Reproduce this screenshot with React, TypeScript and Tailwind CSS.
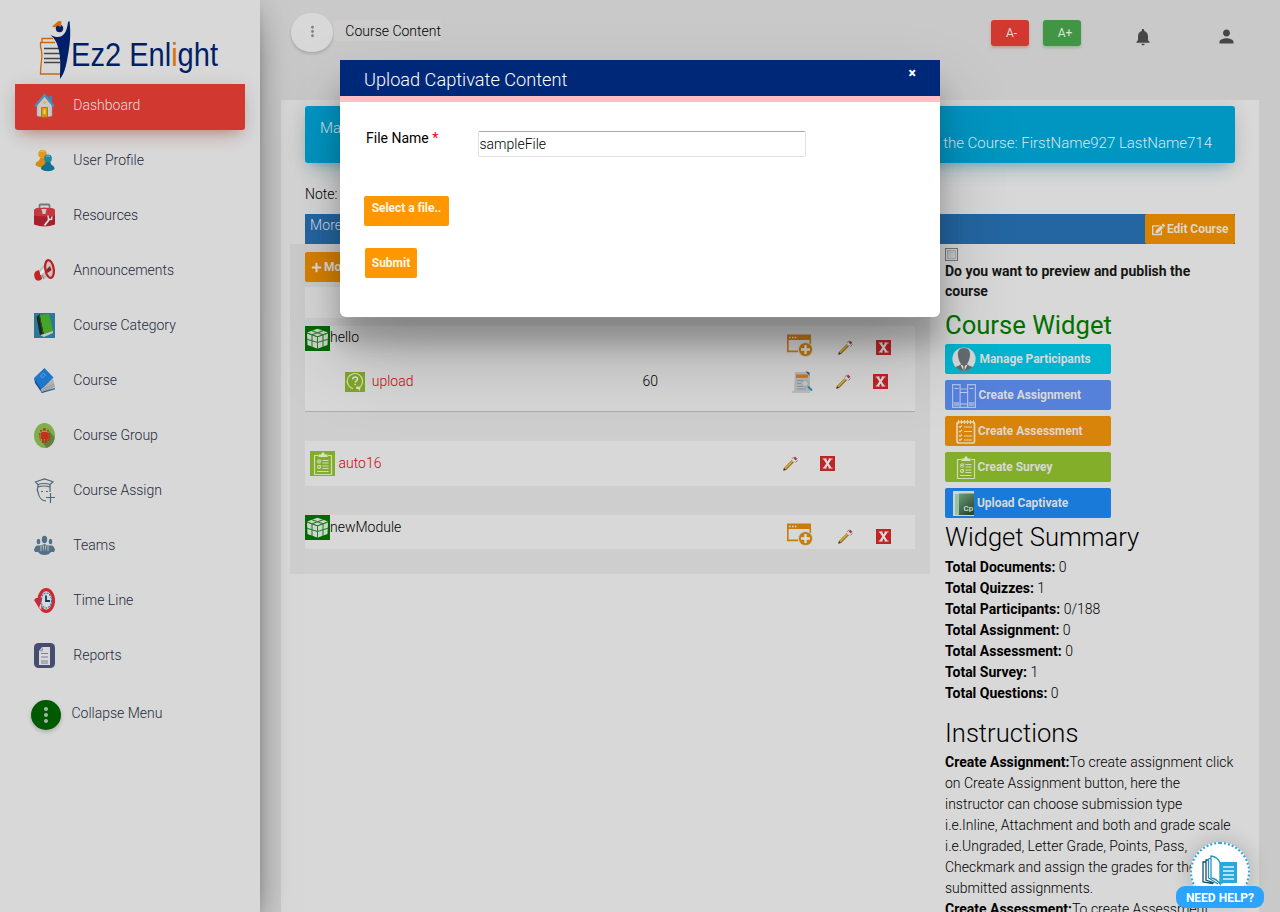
import React from 'react';
import { FaEdit, FaPlus } from 'react-icons/fa';
import { MdNotifications, MdPerson, MdMoreVert } from 'react-icons/md';

const Svg = ({ w, h, vb, className = '', children }: { w: number; h: number; vb?: string; className?: string; children: React.ReactNode }) => (
  <svg width={w} height={h} viewBox={vb ?? `0 0 ${w} ${h}`} preserveAspectRatio="none" className={`block shrink-0 ${className}`} fill="none">
    {children}
  </svg>
);

const Logo = () => (
  <Svg w={184} h={62}>
    <path d="M4 24V19.500h11M2 23.500h15M2.500 23.500v4q2 6 1 14-1 8-1 13.500h20" stroke="#c96a0c" strokeWidth="1.300" />
    <path d="M6 29.500h15M6 34.500h16M6 39.500h16M6 43.500h16" stroke="#444" strokeWidth="1.500" />
    <path d="M12.500 16c9 4.500 16 2 17.500-13l1.500-1c1.500 13 .5 22-1 31-2 11-3 20-8.500 27 0-10 1-19-1-28-1.500-8-4-12-8.500-16z" fill="#001f66" />
    <circle cx="21.500" cy="9.500" r="3.700" fill="#001f66" />
    <path d="M14 7.500L20.500 2l3 .5-.5 5.500-3.500-1.500-2.500 2z" fill="#d8700a" />
    <text x="33" y="47" fontFamily="Liberation Sans, Arial, sans-serif" fontSize="33.500" fill="#001f66" textLength="147" lengthAdjust="spacingAndGlyphs">
      Ez2 Enl<tspan fill="#d8700a">i</tspan>ght
    </text>
  </Svg>
);

const HomeIcon = () => (
  <Svg w={21} h={25}>
    <path d="M15 3h3v7l-3-3z" fill="#3f82b4" />
    <path d="M3 12L10.500 3.500 18 12v11q-7 2-15 0z" fill="#c9c9c9" stroke="#999" strokeWidth=".6" />
    <path d="M1 13.500L10.500 2 20 13.500" stroke="#4f8db8" strokeWidth="2.300" />
    <circle cx="10.500" cy="9.500" r="1.300" fill="#e0b020" />
    <path d="M7.500 14.500h6V24h-6z" fill="#d99a19" stroke="#b07a10" />
    <path d="M9.500 16.500h2V21h-2z" fill="#f5cf4f" />
  </Svg>
);
const UserIcon = () => (
  <Svg w={21} h={25}>
    <circle cx="8.500" cy="6" r="4.300" fill="#e09a1c" />
    <path d="M1.500 17c0-4 4-3 4.500-7h5c0 4 2 3 2 8-3 2-9 2-11.500-1z" fill="#d98c10" />
    <circle cx="14" cy="10.500" r="3.900" fill="#1f86a3" />
    <path d="M7 21c0-4 4-3 4.500-7h5c0 4 4 3 4 7-3 3-10 3-13.500 0z" fill="#10708f" />
    <path d="M6.500 3.500q2-1.500 4 0M12 8.500q2-1.500 4 0" stroke="#fff" strokeOpacity=".4" />
  </Svg>
);
const ToolIcon = () => (
  <Svg w={21} h={25}>
    <path d="M5.500 7V2.500q0-1 1-1h8q1 0 1 1V7" stroke="#777" strokeWidth="1.800" />
    <path d="M0 8q0-2 2-2.500 8.500-1.500 17 0 2 .5 2 2.500v13.500q-10.500 4-21 0z" fill="#a8202b" />
    <path d="M0 8q0-2 2-2.500 8.500-1.500 17 0 2 .5 2 2.500v4.500q-10.500 2-21 0z" fill="#c5383f" />
    <path d="M7.500 6h5l-1 5h-3z" fill="#c9c9c9" />
    <path d="M10.500 22.500l5-6.500" stroke="#ddd" strokeWidth="2" />
    <path d="M14 12.500l.5 3.500 3 .5.500-3" stroke="#ddd" strokeWidth="1.500" />
  </Svg>
);
const HornIcon = () => (
  <Svg w={21} h={25}>
    <path d="M1 14q3-3 6-1l1 8q-3 3-6 1-3-4-1-8z" fill="#c02525" />
    <path d="M5 12.500L13 3l5 16-10 1z" fill="#bcbcbc" />
    <path d="M6 14l7-7 1 5-8 5z" fill="#e8e8e8" />
    <ellipse cx="15.500" cy="11" rx="4.200" ry="9" fill="#c5c5c5" stroke="#bf1e1e" strokeWidth="2.200" transform="rotate(-9 15.500 11)" />
    <path d="M12 12l4-4 1.500 4-4 3z" fill="#8f2525" />
    <path d="M8 17l2 4" stroke="#888" strokeWidth="1.300" />
  </Svg>
);
const GreenBookIcon = () => (
  <Svg w={21} h={25}>
    <path d="M0 0h21v25H0z" fill="#2b7898" />
    <path d="M2.500 4L6 1l4 20-4 1.500z" fill="#222" />
    <path d="M5.500 2L15 1l4 17-9 3.500z" fill="#46a529" />
    <path d="M6 22l4-1 9-3v2l-9 4z" fill="#c5c5c5" />
    <path d="M5.500 3l3.500 18" stroke="#1b5a12" strokeWidth="1.200" />
  </Svg>
);
const BlueBookIcon = () => (
  <Svg w={21} h={25}>
    <path d="M0 10L10.500 0l9 9.500-8 9L6 22z" fill="#1f77cc" />
    <path d="M7 22l5-5 7-7 2 9-13 6z" fill="#b3b3b3" />
    <path d="M9 21l11-5M9 23l12-5" stroke="#888" strokeWidth=".6" />
    <path d="M0 10l7 11 1 4L1 15z" fill="#17539c" />
    <path d="M6.500 8L9.500 5l2 2-3 3z" stroke="#69a9e5" strokeWidth=".8" />
    <path d="M7.500 24.500l13.500-4" stroke="#1d5ba4" strokeWidth="1.300" />
  </Svg>
);
const GroupIcon = () => (
  <Svg w={21} h={25}>
    <ellipse cx="10.500" cy="12.500" rx="10.500" ry="12.500" fill="#7fae4d" />
    <path d="M15 8l5.500 6c0 5-3 9.500-8 11L9 20z" fill="#647f3e" />
    <circle cx="10.500" cy="6.500" r="1.400" fill="#c53018" />
    <circle cx="7" cy="7.700" r="1" fill="#c53018" />
    <circle cx="14" cy="7.700" r="1" fill="#c53018" />
    <path d="M8 9h5l1 1v6h-1v4h-2v-4h-1v4H8v-4H7v-6zM5 10h1.500v8H6zM14.500 10H16l-.5 8h-1z" fill="#c53018" />
  </Svg>
);
const AssignIcon = () => (
  <Svg w={21} h={25}>
    <path d="M1.500 4l4-1.500 5-1.500 5 1.500 3.500 1.500-3 2.500q-6-2-12 0zM4 6v3q6-2 12 0V6M4 9q-1.500 2 0 5c1 6 3 8.500 8 9M16 9v5" stroke="#4d6776" strokeWidth="1.200" />
    <path d="M7 13.500h2M12 13.500h2M16.500 15v10M12 19.500h9" stroke="#4d6776" strokeWidth="1.200" />
  </Svg>
);
const TeamsIcon = () => (
  <Svg w={21} h={25}>
    <g fill="#527186">
      <ellipse cx="10.500" cy="6.500" rx="2.700" ry="3.700" />
      <ellipse cx="4.500" cy="8.500" rx="1.800" ry="2.800" />
      <ellipse cx="16.500" cy="8.500" rx="1.800" ry="2.800" />
      <path d="M0 17q1-4 3-4.500h4L10.500 11l3.500 1.500h4q2 .5 3 4.500l-1 2h-3q-2 3-6.500 3T4 19H1z" />
    </g>
    <path d="M9 12l1.500 7 1.500-7M7 13v5M14 13v5" stroke="#d8d8d8" strokeWidth=".8" />
    <path d="M10.500 12v7" stroke="#527186" />
  </Svg>
);
const ClockIcon = () => (
  <Svg w={21} h={25}>
    <ellipse cx="12.200" cy="12.500" rx="7.300" ry="10.800" fill="#d8d8d8" stroke="#cf2734" strokeWidth="3.200" />
    <path d="M3 17l4-1 .5 6z" fill="#d8d8d8" />
    <path d="M0 12l2-2h6.500L5 20z" fill="#cf2734" />
    <ellipse cx="12.300" cy="12.500" rx="5.200" ry="7.500" stroke="#237ea9" strokeWidth="1.100" strokeDasharray="2 1" />
    <path d="M12 7.500v5.500h4" stroke="#123c5b" strokeWidth="1.800" />
  </Svg>
);
const ReportIcon = () => (
  <Svg w={21} h={25}>
    <rect width="21" height="25" rx="4.500" fill="#454d70" />
    <path d="M8 4h8v18H5V8z" fill="#d8d8d8" />
    <path d="M5 8.500h4V4z" fill="#a5a8b8" />
    <path d="M7 10.500h7M7 14h7M7 18h7M7 20h7" stroke="#7b8098" strokeWidth="1" />
  </Svg>
);

const ModuleIcon = () => (
  <Svg w={25} h={25}>
    <path d="M0 0h25v25H0z" fill="#006b00" />
    <path d="M2 6.500L12.500 2.800 23 6.500l-10.500 4z" fill="#cdd6cd" />
    <path d="M2 7.500l10 3.500v11.500L2.500 19zM23 7.500L13 11v11.500l9.500-3.500z" fill="#cdd6cd" />
    <path d="M7 9v12M18 9v12M2 13.300l10.500 3.200L23 13.300M7 4.800l11 3.900M18 4.800L7 8.700" stroke="#2a7d2a" strokeWidth="1.100" />
    <path d="M12.500 10.500v12.500M2 7l10.500 3.800L23 7" stroke="#2a7d2a" strokeWidth=".9" />
  </Svg>
);
const QuizIcon = () => (
  <Svg w={20} h={20}>
    <path d="M0 0h20v20H0z" fill="#80a827" />
    <path d="M8 16.700A7.700 7.700 0 1 1 15.500 14.500" stroke="#d3dcbf" strokeWidth="1.200" />
    <path d="M11 14.800l5-.5-1.500 5-1-2-2.500-.5z" fill="#d8dfc8" />
    <path d="M7.700 7.300q.3-2.200 2.500-2.200 2.300 0 2.300 2 0 1.200-1.200 1.900-1.100.6-1.100 1.600M10.200 11.700v1.600" stroke="#e1e7d4" strokeWidth="1.500" />
  </Svg>
);
const ClipIcon = ({ bg }: { bg?: string }) => (
  <Svg w={25} h={25}>
    {bg && <path d="M0 0h25v25H0z" fill={bg} />}
    <path d="M8 4.500H4.500v19h17v-19H18" stroke="#d0dab8" strokeWidth="1.200" />
    <path d="M8.500 6V3.500h2.500q2-4.500 4 0h2.500V6z" fill="#d8dfc5" />
    <circle cx="9" cy="10.500" r="1.700" stroke="#d0dab8" />
    <circle cx="9" cy="16" r="1.700" stroke="#d0dab8" />
    <path d="M12.500 9.500h6M12.500 12h6M12.500 15h6M12.500 17.500h6M7 20.500h11.500" stroke="#d0dab8" strokeWidth="1" />
    <path d="M8 10l1 1 2-2.500M8 15.500l1 1 2-2.500" stroke="#d0dab8" strokeWidth=".8" />
  </Svg>
);
const AddWindowIcon = () => (
  <Svg w={26} h={23}>
    <path d="M.8 2v15.400H11" stroke="#c87c0c" strokeWidth="1.600" />
    <path d="M23.300 5v5" stroke="#c87c0c" strokeWidth="1.600" />
    <path d="M0 .5h24V6H0z" fill="#c87c0c" />
    <path d="M2.200 3.500h1.500M5 3.500h1.500M7.800 3.500h1.500" stroke="#ddd" strokeWidth="1.500" />
    <circle cx="18.500" cy="15.500" r="7.500" fill="#cbcbcb" />
    <circle cx="18.500" cy="15.500" r="6.600" fill="#c87c0c" />
    <path d="M18.500 11v9M14 15.500h9" stroke="#ddd" strokeWidth="2.300" />
  </Svg>
);
const PencilIcon = ({ className = '' }: { className?: string }) => (
  <Svg w={15} h={15} className={className}>
    <path d="M1.800 13.200L10.500 4.500" stroke="#7a5d1c" strokeWidth="3" />
    <path d="M2 12.600L10.300 4.300" stroke="#d6ab30" strokeWidth="1.700" />
    <path d="M9.800 5l2-2" stroke="#ddd" strokeWidth="2.800" />
    <path d="M11.600 3.400l1.700-1.700" stroke="#b03442" strokeWidth="3" />
    <path d="M9 2.800l2-2M12.500 6.500l2-2" stroke="#444" strokeWidth=".6" />
    <path d="M.3 14.700L.8 12.200l2 1.900z" fill="#222" />
  </Svg>
);
const DeleteIcon = ({ className = '' }: { className?: string }) => (
  <Svg w={15} h={15} className={className}>
    <path d="M0 0h15v15H0z" fill="#c02425" />
    <path d="M4.600 3l5.800 9M10.400 3l-5.800 9" stroke="#ddd" strokeWidth="2.300" />
    <path d="M2.700 3h4M8.500 3h4M2.700 12h4M8.500 12h4" stroke="#ddd" strokeWidth="1.200" />
  </Svg>
);
const DocIcon = () => (
  <Svg w={21} h={22}>
    <path d="M3 1h12l3 3v16H2z" fill="#b7babc" />
    <path d="M13.500 0l4 1.500v3.500z" fill="#4d5255" />
    <path d="M4 3.500h12v3.300H4z" fill="#cc7820" />
    <path d="M5 9.500h6M5 12.500h4M5 15.500h9M5 18h9" stroke="#8a9ba6" strokeWidth="1.100" />
    <circle cx="13" cy="12.500" r="3.300" fill="#c3c9cd" stroke="#a4a9ad" strokeWidth="1" />
    <path d="M16 15.500l4 4" stroke="#3182aa" strokeWidth="2" />
    <path d="M0 21h18" stroke="#a0a0a0" strokeWidth="1" />
  </Svg>
);

const PersonWidgetIcon = () => (
  <Svg w={24} h={24}>
    <circle cx="12" cy="12" r="11.600" fill="#d5d8d8" />
    <path d="M12 1c5 0 6.500 3.500 6 8-.7 4-1.500 6-3 8v2l-3 1-3-1v-2c-1.500-2-2.300-4-3-8-.5-4.500 1-8 6-8z" fill="#666b70" />
    <path d="M3.500 20q4-1.500 6-3l2.500 6.500L14.500 17q2 1.500 6 3-3.500 4-8.500 4t-8.500-4z" fill="#666b70" />
    <path d="M9.500 18l2.500 5 2.500-5" stroke="#eee" strokeWidth="1.400" />
    <path d="M12 20v4" stroke="#666b70" strokeWidth="1.400" />
  </Svg>
);
const BooksIcon = () => (
  <Svg w={24} h={24}>
    <path d="M.6.6h7.500v22.800H.6zM8.100 5h7.500v18.400H8.100zM15.600.6h7.800v22.800h-7.800z" stroke="#afc0e8" strokeWidth="1.200" />
    <path d="M2.500 4.500h4M17.500 4.500h4M8 8.500h7.500M8 20h7.500" stroke="#c1cdea" strokeWidth="1" />
    <path d="M1.500 18h6v4h-6zM16.500 18h6v4h-6z" fill="#95abe0" />
  </Svg>
);
const ListIcon = () => (
  <Svg w={20} h={25}>
    <rect x="1" y="3" width="17.500" height="21" rx="2" stroke="#e3d4b6" strokeWidth="1.700" />
    <path d="M2.500 1v4M5.500 1v4M8.500 1v4M11.500 1v4M14.500 1v4M17.500 1v4" stroke="#e3d4b6" strokeWidth="1.100" />
    <path d="M8 8h8M8 12.500h8M8 17h8M8 21h8M3 7.500l1 1L6 6.500M3 12l1 1L6 11M3 16.500l1 1L6 15.500M3 20.500l1 1L6 19.500" stroke="#e3d4b6" strokeWidth="1.200" />
  </Svg>
);
const CpIcon = () => (
  <Svg w={21} h={25}>
    <defs><linearGradient id="cp" x1="0" y1="0" x2=".6" y2="1"><stop stopColor="#6e9b77" /><stop offset="1" stopColor="#2b4a35" /></linearGradient></defs>
    <path d="M0 0h21v25H0z" fill="#cdd5d0" />
    <path d="M2 3h4v21H2z" fill="#9ac3a1" />
    <path d="M6 2.500h15V24H6z" fill="url(#cp)" />
    <text x="10.500" y="20" fontFamily="Roboto, sans-serif" fontSize="8" fontWeight="500" fill="#d3e2d5">Cp</text>
  </Svg>
);

const menu: [string, () => React.JSX.Element][] = [
  ['User Profile', UserIcon],
  ['Resources', ToolIcon],
  ['Announcements', HornIcon],
  ['Course Category', GreenBookIcon],
  ['Course', BlueBookIcon],
  ['Course Group', GroupIcon],
  ['Course Assign', AssignIcon],
  ['Teams', TeamsIcon],
  ['Time Line', ClockIcon],
  ['Reports', ReportIcon],
];

const Sidebar = () => (
  <aside className="relative z-10 flex h-full w-[260px] shrink-0 flex-col bg-[#d8d8d8] shadow-[0_16px_38px_-12px_rgba(0,0,0,.56),0_4px_25px_0_rgba(0,0,0,.12),0_8px_10px_-5px_rgba(0,0,0,.2)]">
    <div className="h-[84px] pl-[38px] pt-[19px]"><Logo /></div>
    <nav className="flex flex-col px-[15px] text-[14px] leading-[20px] text-[#252b3c]">
      <div className="flex h-[46px] items-start rounded-b-[3px] bg-[#d13830] pl-[19px] pt-[9px] text-[#e6dcdb] shadow-[0_12px_20px_-10px_rgba(200,50,40,.28),0_4px_20px_0_rgba(0,0,0,.12),0_7px_8px_-5px_rgba(200,50,40,.2)]">
        <HomeIcon />
        <span className="ml-[18.300px] mt-[2px]">Dashboard</span>
      </div>
      {menu.map(([label, Icon]) => (
        <div key={label} className="mt-[5px] flex h-[50px] items-start pl-[19px] pt-[13px]">
          <Icon />
          <span className="ml-[18.300px] mt-[2px]">{label}</span>
        </div>
      ))}
      <div className="mt-[20px] flex h-[30px] items-start pl-4">
        <span className="flex h-[30px] w-[30px] items-center justify-center rounded-full bg-[#005a00] text-[#a9b5a9] shadow-[0_2px_4px_rgba(0,0,0,.2)]">
          <MdMoreVert size={24} />
        </span>
        <span className="ml-[10.500px] mt-[3px]">Collapse Menu</span>
      </div>
    </nav>
  </aside>
);

const Header = () => (
  <header className="flex h-[100px] items-start pl-[31px]">
    <button className="mt-[13px] flex h-[39px] w-[42px] items-center justify-center rounded-[20px] bg-[#d8d8d8] pb-[2px] text-[#808080] shadow-[0_2px_3px_rgba(0,0,0,.16)]">
      <MdMoreVert size={17} />
    </button>
    <span className="ml-[1px] mt-[20px] h-[21px] w-[107px] whitespace-nowrap rounded-[3px] bg-[#cdcdcd] pl-[11.300px] text-[14px] leading-[22px] text-black">Course Content</span>
    <button className="ml-[550px] mt-[20px] h-[26px] w-[38px] rounded-[3px] bg-[#d13830] pl-[3px] text-[12px] font-normal leading-[27px] text-[#e6d6d5] shadow-[0_2px_3px_rgba(200,50,40,.3)]">A-</button>
    <button className="ml-[14px] mt-[20px] h-[26px] w-[38px] rounded-[3px] bg-[#419544] pl-[6px] text-[12px] font-normal leading-[27px] text-[#d6e4d7] shadow-[0_2px_3px_rgba(50,140,60,.3)]">A+</button>
    <MdNotifications size={20} className="ml-[52px] mt-[27px] text-[#464646]" />
    <MdPerson size={21} className="ml-[63px] mt-[26px] text-[#464646]" />
  </header>
);

const Modules = () => (
  <section className="h-[330px] w-[640px] bg-[#cecece] px-[15px] pt-[8px] text-[14px] leading-[20px] text-black">
    <button className="flex h-[30px] w-[90px] items-center rounded-[2px] bg-[#d88200] pl-[6px] text-[12px] font-bold text-[#ddd]"><FaPlus size={11} className="mr-[2px]" />Module</button>
    <div className="mt-[5px] h-[31px] bg-[#d8d8d8]" />
    <div className="mt-[8px] h-[86px] border-b border-[#adadad] bg-[#d8d8d8]">
      <div className="flex items-start">
        <ModuleIcon /><span className="mt-[1px] w-[457px]">hello</span>
        <div className="mt-[8px]"><AddWindowIcon /></div>
        <PencilIcon className="ml-[25px] mt-[14px]" /><DeleteIcon className="ml-[23px] mt-[14px]" />
      </div>
      <div className="mt-[14px] flex items-start pl-[40px]">
        <div className="mt-[1px]"><QuizIcon /></div>
        <span className="ml-[6.700px] w-[270.700px] text-[#d40010]">upload</span>
        <span className="w-[149.600px]">60</span>
        <DocIcon /><PencilIcon className="ml-[23px] mt-[3px]" /><DeleteIcon className="ml-[22px] mt-[3px]" />
      </div>
    </div>
    <div className="mt-[29px] flex h-[45px] items-start bg-[#d8d8d8] pl-[5px] pt-[10px]">
      <ClipIcon bg="#83ac29" /><span className="ml-[3.500px] mt-[2px] w-[444.500px] text-[#d40010]">auto16</span>
      <PencilIcon className="mt-[5px]" /><DeleteIcon className="ml-[22px] mt-[5px]" />
    </div>
    <div className="mt-[29px] flex h-[34px] items-start bg-[#d8d8d8]">
      <ModuleIcon /><span className="mt-[2px] w-[457px]">newModule</span>
      <div className="mt-[8px]"><AddWindowIcon /></div>
      <PencilIcon className="ml-[25px] mt-[14px]" /><DeleteIcon className="ml-[23px] mt-[14px]" />
    </div>
  </section>
);

const widgetButton = 'mb-[6px] flex h-[30px] w-[166px] items-start rounded-[2px] text-[12px] font-bold leading-[30px] tracking-[-0.05px] text-[#d8d8d8]';

const summary = [
  ['Total Documents:', '0'],
  ['Total Quizzes:', '1'],
  ['Total Participants:', '0/188'],
  ['Total Assignment:', '0'],
  ['Total Assessment:', '0'],
  ['Total Survey:', '1'],
  ['Total Questions:', '0'],
];

const Widgets = () => (
  <section className="ml-[15px] flex w-[290px] flex-col pt-[4px] text-[14px] leading-[21px] text-black">
    <div className="flex h-[13px] w-[13px] items-center justify-center border border-[#777] bg-[#d4d4d4]">
      <span className="h-[9px] w-[9px] border border-[#a9adb3] bg-gradient-to-br from-[#b5b8bb] to-[#d3d3d3]" />
    </div>
    <p className="font-bold leading-[20px] text-[#161616]">Do you want to preview and publish the course</p>
    <h3 className="mt-[5px] h-[38px] text-[25.600px] font-normal leading-[38px] text-[#007000]">Course Widget</h3>
    <button className={`${widgetButton} bg-[#00b4cf] pl-[7px]`}>
      <span className="mt-[3px]"><PersonWidgetIcon /></span><span className="ml-[3.500px]">Manage Participants</span>
    </button>
    <button className={`${widgetButton} bg-[#5581da] pl-[7px]`}>
      <span className="mt-[4px]"><BooksIcon /></span><span className="ml-[2.500px]">Create Assignment</span>
    </button>
    <button className={`${widgetButton} bg-[#d8830a] pl-[11px]`}>
      <span className="mt-[3px]"><ListIcon /></span><span className="ml-[2px]">Create Assessment</span>
    </button>
    <button className={`${widgetButton} bg-[#83ae2a] pl-[8px]`}>
      <span className="mt-[3px]"><ClipIcon /></span><span className="-ml-[0.500px]">Create Survey</span>
    </button>
    <button className={`${widgetButton} bg-[#1a7ada] pl-[8px]`}>
      <span className="mt-[3px]"><CpIcon /></span><span className="ml-[3px]">Upload Captivate</span>
    </button>
    <h3 className="-mt-[6px] h-[39px] text-[25.600px] leading-[38px]">Widget Summary</h3>
    {summary.map(([k, v]) => (
      <p key={k}><b className="font-bold">{k}</b> {v}</p>
    ))}
    <h3 className="mt-[10px] h-[38px] text-[25.600px] leading-[38px]">Instructions</h3>
    <p><b className="font-bold">Create Assignment:</b>To create assignment click on Create Assignment button, here the instructor can choose submission type i.e.Inline, Attachment and both and grade scale i.e.Ungraded, Letter Grade, Points, Pass, Checkmark and assign the grades for the submitted assignments.</p>
    <p><b className="font-bold">Create Assessment:</b>To create Assessment</p>
  </section>
);

const Modal = () => (
  <div className="absolute left-[340px] top-[60px] z-20 h-[257px] w-[600px] overflow-visible rounded-b-[6px] bg-white shadow-[0_27px_24px_0_rgba(0,0,0,.2),0_40px_77px_0_rgba(0,0,0,.22)]">
    <div className="flex h-[42px] items-start justify-between border-b-[6px] border-[#ffc0c4] bg-[#002878] pl-[24px] pr-[24px] text-white">
      <h4 className="text-[18.200px] leading-[39px]">Upload Captivate Content</h4>
      <button className="mt-[3px] h-[20px] text-[14px] font-black leading-[20px]">×</button>
    </div>
    <div className="flex items-start pl-[26px] pt-[26px]">
      <label className="w-[112px] text-[14px] font-normal leading-[20px] text-black">File Name <span className="text-red-600">*</span></label>
      <input className="mt-[3px] h-[26px] w-[328px] rounded-[2px] border border-[#e1e2e8] border-t-[#aaaab2] bg-white px-[0.500px] text-[14px] text-black outline-none" defaultValue="sampleFile" />
    </div>
    <div className="flex flex-col items-start pl-[24px] pt-[39px] text-[12px] font-bold text-[#fff6e6]">
      <button className="h-[30px] w-[85px] rounded-[2px] bg-[#ff9800] pb-[6px] leading-[24px] tracking-[-0.05px]">Select a file..</button>
      <button className="ml-[1px] mt-[22px] h-[30px] w-[52px] rounded-[2px] bg-[#ff9800] leading-[29px]">Submit</button>
    </div>
  </div>
);

const Help = () => (
  <div className="absolute left-[1176px] top-[842px] z-30 flex h-[66px] w-[88px] flex-col items-center">
    <div className="flex h-[60px] w-[60px] shrink-0 items-start justify-center rounded-full border-2 border-dotted border-[#29a9df] bg-white pt-[11px] shadow-[0_0_22px_rgba(0,0,0,.2)]">
      <Svg w={36} h={31}>
        <path d="M4 7H1v20l10 1.500M7 5H4v20l8 3" stroke="#15506f" strokeWidth="1.300" />
        <path d="M10 3L6.500 4v19L16 29" stroke="#2b8fb7" strokeWidth="1.300" />
        <path d="M9 1q7 1 9 7v21q-3-5-9-6z" fill="#fff" stroke="#2497c3" strokeWidth="1.300" />
        <path d="M18 7h17v21H23q-3 0-5 2z" fill="#27a9df" />
        <path d="M21 12h11M21 16h11M21 20h11M21 24h11" stroke="#dff3fc" strokeWidth="1.700" />
      </Svg>
    </div>
    <span className="relative -mt-[16px] flex h-[22px] w-[88px] shrink-0 items-center justify-center rounded-[9px] bg-[#2ca3fc] pt-[1px] text-[12px] font-bold text-white">NEED HELP?</span>
  </div>
);

export default function App() {
  return (
    <div className="relative flex h-[912px] w-[1280px] overflow-hidden bg-[#c9c9c9] font-[Roboto,sans-serif] font-light">
      <Sidebar />
      <main className="flex w-[1020px] flex-col">
        <Header />
        <div className="ml-[21px] h-[812px] w-[978px] overflow-hidden bg-[#d8d8d8] pt-[6px]">
          <div className="mx-[24px] flex h-[57px] justify-between rounded-[3px] bg-[#0096c2] pl-[15px] pr-[23px] text-[15px] leading-[20px] text-[#d8e8ee] shadow-[0_12px_20px_-10px_rgba(0,150,180,.28),0_4px_20px_0_rgba(0,0,0,.12),0_7px_8px_-5px_rgba(0,150,180,.2)]">
            <span className="mt-[12px]">Manage</span>
            <span className="mt-[27px]">Instructor of the Course: FirstName927 LastName714</span>
          </div>
          <p className="ml-[24px] mt-[21px] h-[30px] text-[14px] leading-[20px] text-black">Note:</p>
          <div className="mx-[24px] flex h-[30px] items-start justify-between bg-[#2466a2] pl-[5px] text-[14px] leading-[23px] text-[#d8dee5]">
            <span className="tracking-[0.1px]">More</span>
            <button className="flex h-[30px] w-[90px] items-center rounded-[2px] bg-[#d88200] pl-[7px] text-[12px] font-bold tracking-[-0.05px] text-[#dcd6c8]"><FaEdit size={13} className="mr-[2px]" />Edit Course</button>
          </div>
          <div className="ml-[9px] flex items-start">
            <Modules />
            <Widgets />
          </div>
        </div>
      </main>
      <Modal />
      <Help />
    </div>
  );
}
